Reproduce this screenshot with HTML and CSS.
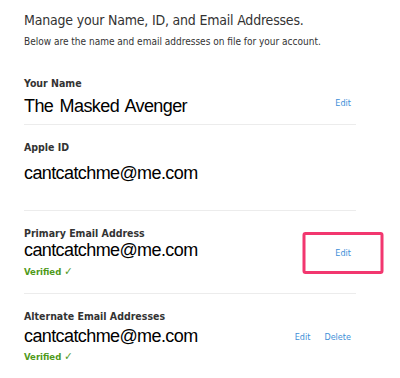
FILE: index.html
```html
<!DOCTYPE html>
<html lang="en">
<head>
  <meta charset="UTF-8">
  <meta name="viewport" content="width=device-width, initial-scale=1.0">
  <title>Name, ID and Email Addresses</title>
  <link rel="stylesheet" href="styles.css">
</head>
<body>
  <div class="container">
    <h1>Manage your Name, ID, and Email Addresses.</h1>
    <p class="intro">Below are the name and email addresses on file for your account.</p>

    <div class="field field-name">
      <div class="field-label">Your Name</div>
      <div class="field-line">
        <span class="field-value name-value">The Masked Avenger</span>
        <div class="field-actions"><a href="#">Edit</a></div>
      </div>
    </div>

    <div class="field field-id">
      <div class="field-label">Apple ID</div>
      <div class="field-line">
        <span class="field-value">cantcatchme@me.com</span>
      </div>
    </div>

    <div class="field field-primary">
      <div class="field-label">Primary Email Address</div>
      <div class="field-line">
        <span class="field-value">cantcatchme@me.com</span>
        <div class="field-actions"><a href="#" class="highlight">Edit</a></div>
      </div>
      <div class="verified">Verified <span class="check">&#10003;</span></div>
    </div>

    <div class="field field-alternate">
      <div class="field-label">Alternate Email Addresses</div>
      <div class="field-line">
        <span class="field-value">cantcatchme@me.com</span>
        <div class="field-actions"><a href="#">Edit</a><a href="#">Delete</a></div>
      </div>
      <div class="verified">Verified <span class="check">&#10003;</span></div>
    </div>
  </div>
</body>
</html>
```

FILE: styles.css
```css
body {
  margin: 0;
  padding: 0;
  background-color: #ffffff;
  font-family: "DejaVu Sans Condensed", "DejaVu Sans", sans-serif;
  color: #333333;
}

.container {
  width: 332px;
  padding: 10px 0 0 24px;
}

h1 {
  font-size: 14px;
  font-weight: normal;
  color: #333333;
  margin: 0;
  line-height: 20px;
  letter-spacing: -0.2px;
  white-space: nowrap;
}

.intro {
  font-size: 10px;
  margin: 5px 0 0 0;
  line-height: 14px;
  white-space: nowrap;
}

.field {
  border-bottom: 1px solid #ececec;
}

.field-alternate {
  border-bottom: none;
}

.field-label {
  font-size: 10.5px;
  font-weight: bold;
  color: #333333;
  line-height: 14px;
}

.field-line {
  display: flex;
  align-items: center;
  justify-content: space-between;
}

.field-value {
  font-family: "Liberation Sans", Arial, sans-serif;
  font-size: 18px;
  color: #000000;
  line-height: 22px;
  letter-spacing: -0.6px;
}

.name-value {
  word-spacing: 2px;
}

.field-actions {
  display: flex;
  gap: 14px;
  padding-right: 5px;
}

.field-actions a {
  font-size: 9px;
  color: #3e8fd8;
  text-decoration: none;
  line-height: 12px;
}

.highlight {
  position: relative;
}

.highlight::after {
  content: "";
  position: absolute;
  left: 50%;
  top: 50%;
  width: 75px;
  height: 36px;
  transform: translate(-50%, -50%);
  border: 3px solid #f2376f;
  border-radius: 3px;
}

.verified {
  font-size: 9.5px;
  font-weight: bold;
  color: #4f9a1a;
  line-height: 14px;
}

.check {
  font-size: 11px;
  font-weight: normal;
}

.field-name {
  padding: 27px 0 7px 0;
}

.field-name .field-label {
  margin-bottom: 5px;
}

.field-name .field-actions {
  margin-bottom: 6px;
}

.field-id {
  padding: 15px 0 26px 0;
}

.field-id .field-label {
  margin-bottom: 8px;
}

.field-primary {
  padding: 15px 0 14px 0;
}

.field-primary .field-label {
  margin-bottom: -1px;
}

.field-primary .field-actions {
  margin-top: 6px;
}

.field-primary .verified {
  margin-top: 4px;
}

.field-alternate {
  padding: 15px 0 0 0;
}

.field-alternate .field-label {
  margin-bottom: 2px;
}

.field-alternate .field-actions {
  margin-top: 2px;
}

.field-alternate .verified {
  margin-top: 3px;
}
```
